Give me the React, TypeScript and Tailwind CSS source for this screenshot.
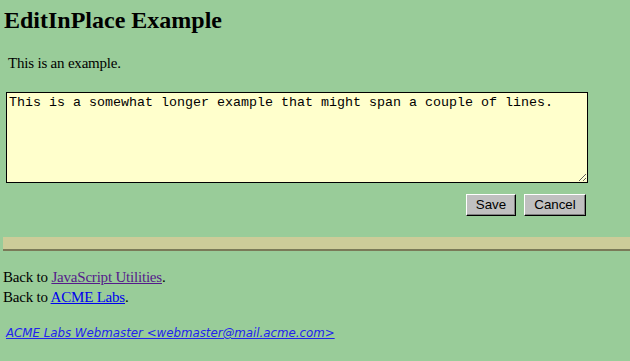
export default function App() {
	return (
		<div className="min-h-screen overflow-hidden bg-[#99cc99] font-['Liberation_Serif',serif] text-black">
			{/* Heading */}
			<h2 className="pl-[4px] pt-[6px] text-[24px] font-bold leading-[28px]">
				EditInPlace Example
			</h2>

			<p className="ml-[8px] mt-[19px] text-[15px] leading-[20px] tracking-[-0.2px]">This is an example.</p>

			{/* Edit area */}
			<div className="ml-[6px] mt-[19px] w-[582px]">
				<textarea
					defaultValue="This is a somewhat longer example that might span a couple of lines."
					className="block box-border h-[91px] w-[582px] border border-black bg-[#ffffcc] p-[2px] font-['Liberation_Mono',monospace] text-[13.33px] leading-[15px] text-black outline-none"
				/>
				<div className="mt-[11px] flex justify-end gap-[8px] pr-[2px]">
					<button className="box-border h-[22px] w-[50px] border border-b-black border-l-white border-r-black border-t-white bg-[#c0c0c0] font-['Liberation_Sans',sans-serif] text-[13.33px] text-black shadow-[inset_-1px_-1px_0_#808080]">
						Save
					</button>
					<button className="box-border h-[22px] w-[62px] border border-b-black border-l-white border-r-black border-t-white bg-[#c0c0c0] font-['Liberation_Sans',sans-serif] text-[13.33px] text-black shadow-[inset_-1px_-1px_0_#808080]">
						Cancel
					</button>
				</div>
			</div>

			{/* Divider */}
			<div className="ml-[3px] mt-[21px] h-[14px] border-b-2 border-[#7a7a58] bg-[#cccc99]" />

			{/* Links */}
			<div className="ml-[3px] mt-[16px] text-[15px] leading-[20px] tracking-[-0.2px]">
				<div>
					Back to <a href="#" className="text-[#551a8b] underline">JavaScript Utilities</a>.
				</div>
				<div>
					Back to <a href="#" className="text-[#0000ee] underline">ACME Labs</a>.
				</div>
			</div>

			{/* Footer */}
			<div className="ml-[6px] mt-[18px] font-['DejaVu_Sans',sans-serif] text-[11.8px] italic leading-[16px]">
				<a href="#" className="text-[#2222ee] underline">
					ACME Labs Webmaster &lt;webmaster@mail.acme.com&gt;
				</a>
			</div>
		</div>
	);
}
